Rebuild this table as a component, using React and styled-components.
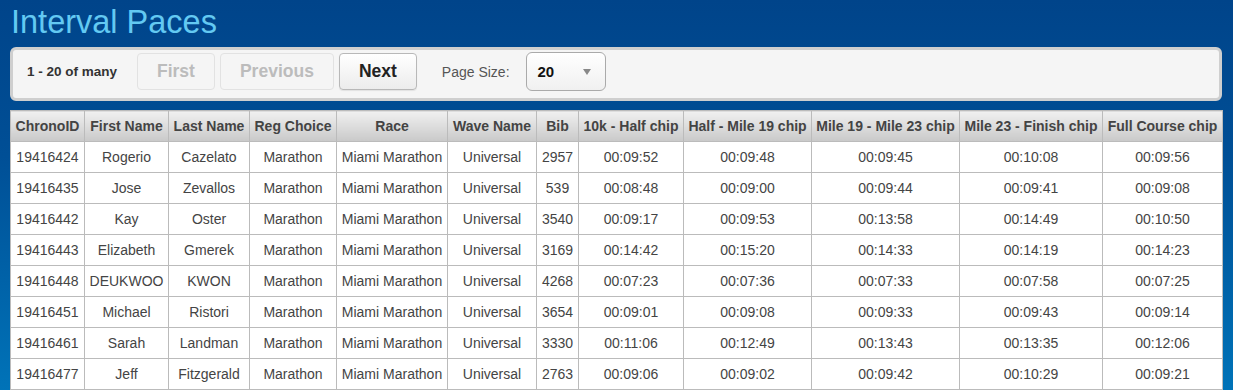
import styled, { createGlobalStyle } from 'styled-components';

const GlobalStyle = createGlobalStyle`
    html, body {
        margin: 0;
        padding: 0;
    }
    body {
        font-family: "Liberation Sans", Arial, sans-serif;
        background: linear-gradient(to bottom, #00448a 0%, #004f96 40%, #0073b8 100%);
        height: 390px;
        overflow: hidden;
    }
`;

const columns = [
    { label: "ChronoID", width: 74 },
    { label: "First Name", width: 84 },
    { label: "Last Name", width: 81 },
    { label: "Reg Choice", width: 87 },
    { label: "Race", width: 111 },
    { label: "Wave Name", width: 89 },
    { label: "Bib", width: 42 },
    { label: "10k - Half chip", width: 105 },
    { label: "Half - Mile 19 chip", width: 128 },
    { label: "Mile 19 - Mile 23 chip", width: 148 },
    { label: "Mile 23 - Finish chip", width: 143 },
    { label: "Full Course chip", width: 120 },
];

const rows = [
    ["19416424", "Rogerio", "Cazelato", "2957", "00:09:52", "00:09:48", "00:09:45", "00:10:08", "00:09:56"],
    ["19416435", "Jose", "Zevallos", "539", "00:08:48", "00:09:00", "00:09:44", "00:09:41", "00:09:08"],
    ["19416442", "Kay", "Oster", "3540", "00:09:17", "00:09:53", "00:13:58", "00:14:49", "00:10:50"],
    ["19416443", "Elizabeth", "Gmerek", "3169", "00:14:42", "00:15:20", "00:14:33", "00:14:19", "00:14:23"],
    ["19416448", "DEUKWOO", "KWON", "4268", "00:07:23", "00:07:36", "00:07:33", "00:07:58", "00:07:25"],
    ["19416451", "Michael", "Ristori", "3654", "00:09:01", "00:09:08", "00:09:33", "00:09:43", "00:09:14"],
    ["19416461", "Sarah", "Landman", "3330", "00:11:06", "00:12:49", "00:13:43", "00:13:35", "00:12:06"],
    ["19416477", "Jeff", "Fitzgerald", "2763", "00:09:06", "00:09:02", "00:09:42", "00:10:29", "00:09:21"],
];

export default function App() {
    return (
        <>
            <GlobalStyle />
            <Page>
                <Title>Interval Paces</Title>
                <Toolbar>
                    <Count>1 - 20 of many</Count>
                    <PagerButton disabled>First</PagerButton>
                    <PagerButton disabled>Previous</PagerButton>
                    <PagerButton>Next</PagerButton>
                    <SizeLabel>Page Size:</SizeLabel>
                    <SizeSelect>
                        20
                        <Arrow />
                    </SizeSelect>
                </Toolbar>
                <Table>
                    <colgroup>
                        {columns.map((c) => <col key={c.label} style={{ width: c.width }} />)}
                    </colgroup>
                    <thead>
                        <tr>
                            {columns.map((c) => <Th key={c.label}>{c.label}</Th>)}
                        </tr>
                    </thead>
                    <tbody>
                        {rows.map((r) =>
                            <tr key={r[0]}>
                                <Td>{r[0]}</Td>
                                <Td>{r[1]}</Td>
                                <Td>{r[2]}</Td>
                                <Td>Marathon</Td>
                                <Td>Miami Marathon</Td>
                                <Td>Universal</Td>
                                <Td>{r[3]}</Td>
                                <Td>{r[4]}</Td>
                                <Td>{r[5]}</Td>
                                <Td>{r[6]}</Td>
                                <Td>{r[7]}</Td>
                                <Td>{r[8]}</Td>
                            </tr>
                        )}
                    </tbody>
                </Table>
            </Page>
        </>
    )
}

const Page = styled.div`
    padding: 0 11px 0 10px;
`

const Title = styled.h1`
    margin: 0;
    padding: 6px 0 0 1px;
    height: 47px;
    box-sizing: border-box;
    font-size: 32.5px;
    font-weight: normal;
    line-height: 33px;
    color: #63c9f2;
`

const Toolbar = styled.div`
    display: flex;
    align-items: center;
    height: 54px;
    box-sizing: border-box;
    border: 3px solid #cfcfcf;
    border-radius: 6px;
    background: #f5f5f5;
    padding: 0 0 5px 14px;
    margin-bottom: 9px;
`

const Count = styled.span`
    font-size: 13.5px;
    font-weight: bold;
    color: #333;
    width: 110px;
`

const PagerButton = styled.button`
    font-family: "Liberation Sans", Arial, sans-serif;
    font-size: 17.5px;
    font-weight: bold;
    height: 37px;
    padding: 0 19px;
    margin-right: 5px;
    border-radius: 4px;
    border: 1px solid ${props => props.disabled ? "#e2e2e2" : "#b8b8b8"};
    color: ${props => props.disabled ? "#bcbcbc" : "#222"};
    background: ${props => props.disabled ? "#f5f5f5" : "linear-gradient(to bottom, #ffffff, #ececec)"};
    box-shadow: ${props => props.disabled ? "none" : "0 1px 1px rgba(0,0,0,0.08)"};
`

const SizeLabel = styled.span`
    font-size: 14px;
    color: #555;
    margin-left: 20px;
    margin-right: 16px;
`

const SizeSelect = styled.div`
    position: relative;
    width: 80px;
    height: 39px;
    box-sizing: border-box;
    border: 1px solid #aaa;
    border-radius: 6px;
    background: linear-gradient(to bottom, #ffffff, #f0f0f0);
    font-size: 15px;
    font-weight: bold;
    color: #111;
    display: flex;
    align-items: center;
    padding-left: 11px;
`

const Arrow = styled.span`
    position: absolute;
    right: 14px;
    top: 16px;
    width: 0;
    height: 0;
    border-left: 4px solid transparent;
    border-right: 4px solid transparent;
    border-top: 6px solid #888;
`

const Table = styled.table`
    width: 1212px;
    table-layout: fixed;
    border-collapse: collapse;
    background: #fff;
`

const Th = styled.th`
    height: 31px;
    padding: 0;
    font-size: 14px;
    font-weight: bold;
    color: #444;
    white-space: nowrap;
    border: 1px solid #bbb;
    background: linear-gradient(to bottom, #f0f0f0, #c9c9c9);
    box-sizing: border-box;
`

const Td = styled.td`
    height: 31px;
    padding: 0;
    font-size: 14px;
    color: #444;
    text-align: center;
    white-space: nowrap;
    border: 1px solid #bbb;
    box-sizing: border-box;
`
